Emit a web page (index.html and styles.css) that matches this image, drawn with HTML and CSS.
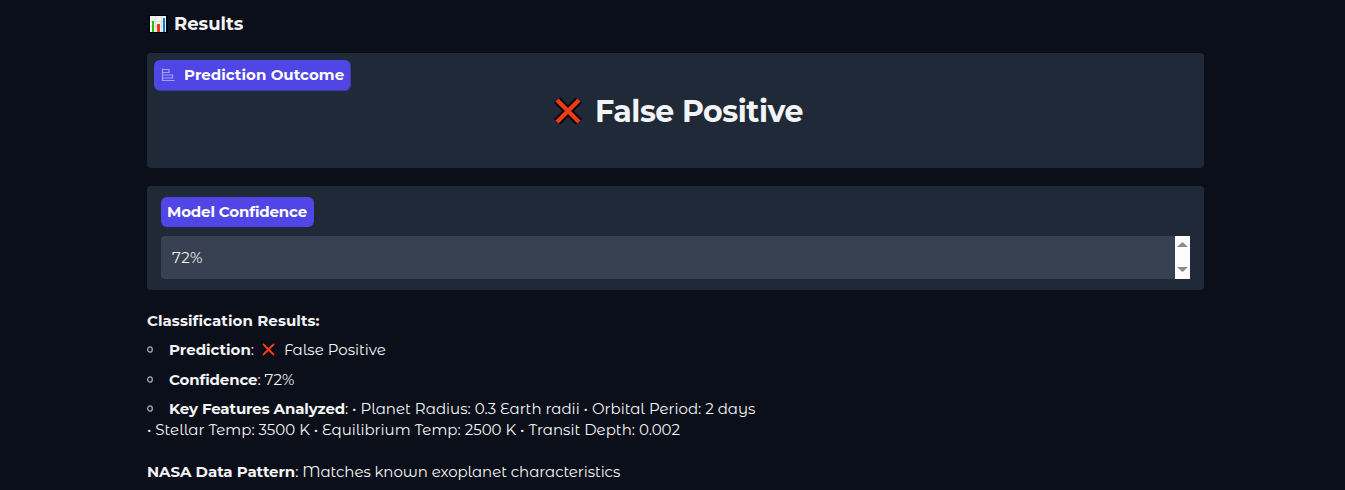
FILE: index.html
```html
<!DOCTYPE html>
<html lang="en">
<head>
<meta charset="utf-8">
<title>Results</title>
<link rel="stylesheet" href="styles.css">
</head>
<body>
<main class="results">
  <h3 class="heading">
    <svg class="chart-icon" viewBox="0 0 19 18"><rect width="19" height="18" fill="#000"/><rect x="1" y="1" width="16" height="16" fill="#f3f3f3"/><path d="M1 6.5h16M1 11.5h16M6.500 1v16M12.500 1v16" stroke="#dcdcdc"/><rect x="3" y="6" width="2" height="11" fill="#16c60c"/><rect x="8" y="9" width="3" height="8" fill="#f03a17"/><rect x="14" y="3" width="2" height="14" fill="#0078d4"/></svg>
    <span class="t-results">Results</span>
  </h3>
  <section class="card outcome">
    <div class="tag tag-outcome">
      <svg class="bars-icon" viewBox="0 0 14 14" fill="none" stroke="currentColor"><path d="M1.500 .5v12H13.500M1.500 1.500H8v3H1.500M1.500 7H11.500v3H1.500" stroke-width="1.200"/></svg>
      <span class="t-outcome">Prediction Outcome</span>
    </div>
    <h2 class="verdict">
      <svg class="cross-lg" viewBox="0 0 30 30"><path d="M4 4 26 26M26 4 4 26" stroke="#000" stroke-width="8"/><path d="M4 4 26 26M26 4 4 26" stroke="#f03a17" stroke-width="4.500"/></svg>
      <span class="t-verdict">False Positive</span>
    </h2>
  </section>
  <section class="card confidence">
    <div class="tag tag-model"><span class="t-model">Model Confidence</span></div>
    <div class="field">
      <span class="t-value">72%</span>
      <div class="scroll">
        <svg class="arrow" viewBox="0 0 11 5"><path d="M0 5 5.500 0 11 5z" fill="#8b8b8b"/></svg>
        <svg class="arrow" viewBox="0 0 11 5"><path d="M0 0 5.500 5 11 0z" fill="#8b8b8b"/></svg>
      </div>
    </div>
  </section>
  <div class="details">
    <p class="line"><b class="t-class">Classification Results:</b></p>
    <p class="line item"><svg class="dot" viewBox="0 0 6 7"><ellipse cx="3" cy="3.500" rx="2.300" ry="2.700"/></svg><b class="t-pred">Prediction</b><span>:</span><svg class="cross-sm" viewBox="0 0 15 15"><path d="M2 2 13 13M13 2 2 13" stroke="#000" stroke-width="4"/><path d="M2 2 13 13M13 2 2 13" stroke="#f03a17" stroke-width="2.200"/></svg><span class="t-false">False Positive</span></p>
    <p class="line item"><svg class="dot" viewBox="0 0 6 7"><ellipse cx="3" cy="3.500" rx="2.300" ry="2.700"/></svg><b class="t-conf">Confidence</b><span class="t-72">: 72%</span></p>
    <p class="line item"><svg class="dot" viewBox="0 0 6 7"><ellipse cx="3" cy="3.500" rx="2.300" ry="2.700"/></svg><b class="t-key">Key Features Analyzed</b><span class="t-planet">: • Planet Radius: 0.3 Earth radii • Orbital Period: 2 days</span></p>
    <p class="line stellar"><span class="t-stellar">• Stellar Temp: 3500 K • Equilibrium Temp: 2500 K • Transit Depth: 0.002</span></p>
    <p class="line nasa"><b class="t-nasa">NASA Data Pattern</b><span class="t-match">: Matches known exoplanet characteristics</span></p>
  </div>
</main>
</body>
</html>
```
FILE: styles.css
```css
* { box-sizing: border-box; }
body { margin: 0; height: 490px; overflow: hidden; background: #0b0f19; color: #f3f4f6; font: 400 15px/21px "Montserrat Alternates", Montserrat, Inter, "Open Sans", sans-serif; }
.results { width: 1057px; margin-left: 147px; padding-top: 11px; }
span, b { white-space: pre; }
b, .heading, .tag, .verdict { font-family: Montserrat, Inter, "Open Sans", sans-serif; }
b { font-weight: 700; }
svg { flex: none; }
.heading { display: flex; align-items: center; height: 25px; margin: 0 0 17px; padding-left: 2px; gap: 6px; font-size: 18px; font-weight: 700; }
.t-results { padding-top: 1px; }
.chart-icon { width: 19px; height: 18px; }
.card { background: #1f2937; border-radius: 4px; }
.outcome { height: 115px; padding: 7px; margin-bottom: 18px; }
.tag { display: flex; align-items: center; height: 30px; padding: 0 6px; border-radius: 6px; background: #4f46e5; color: #fff; font-weight: 700; letter-spacing: -.15px; }
.tag-outcome { width: 197px; height: 31px; padding-bottom: 1px; border: 1px solid #3d3ca5; border-width: 0 1px 1px 0; letter-spacing: .06px; }
.bars-icon { width: 14px; height: 14px; margin: 1px 9px 0 1px; color: #a5a0f5; }
.verdict { display: flex; align-items: center; justify-content: center; height: 40px; margin: 0; gap: 12px; padding-left: 5px; font-size: 30px; font-weight: 700; letter-spacing: -.45px; }
.cross-lg { width: 30px; height: 30px; }
.confidence { height: 104px; padding: 11px 14px; }
.tag-model { width: 153px; padding-bottom: 1px; }
.field { display: flex; align-items: center; justify-content: space-between; height: 43px; margin-top: 9px; padding-left: 11px; background: #374151; border-radius: 4px 0 0 4px; }
.t-value { letter-spacing: .3px; }
.scroll { display: flex; flex-direction: column; justify-content: space-between; align-items: center; width: 15px; height: 43px; padding: 6px 0 7px; background: #fcfcfc; }
.arrow { width: 11px; height: 5px; }
.details { padding-top: 20px; }
.line { display: flex; align-items: center; height: 21px; margin: 0; }
.item { margin-top: 8.400px; }
.dot { width: 6px; height: 7px; margin-right: 16px; fill: none; stroke: #a9abb2; stroke-width: 1.300; }
.cross-sm { width: 15px; height: 15px; margin: 0 8px 0 7px; }
.t-class { letter-spacing: .08px; }
.t-conf { letter-spacing: -.12px; }
.t-key { letter-spacing: -.12px; }
.t-nasa { letter-spacing: -.06px; }
.t-match { letter-spacing: -.07px; }
.nasa { margin-top: 21px; }
```
